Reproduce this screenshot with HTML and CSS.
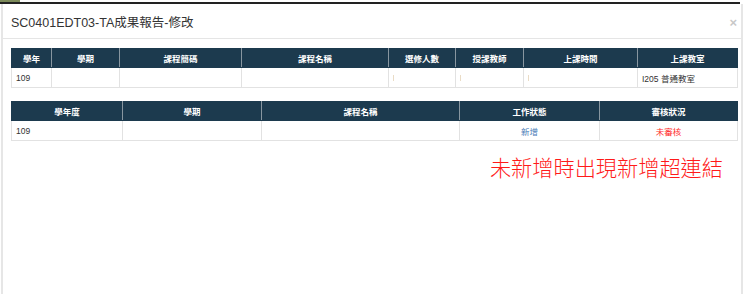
FILE: index.html
```html
<!DOCTYPE html>
<html lang="zh-Hant">
<head>
  <meta charset="UTF-8">
  <title>SC0401EDT03-TA成果報告-修改</title>
  <link rel="stylesheet" href="styles.css">
</head>
<body>
  <div class="topbar"><span class="topbar-green"></span></div>

  <div class="modal">
    <div class="modal-header">
      <h4 class="modal-title">SC0401EDT03-TA成果報告-修改</h4>
      <span class="close">×</span>
    </div>

    <div class="modal-body">
      <table class="grid grid1">
        <colgroup>
          <col class="c40"><col class="c68"><col class="c122"><col class="c147">
          <col class="c67"><col class="c68"><col class="c114"><col>
        </colgroup>
        <thead>
          <tr>
            <th>學年</th>
            <th>學期</th>
            <th>課程簡碼</th>
            <th>課程名稱</th>
            <th>選修人數</th>
            <th>授課教師</th>
            <th>上課時間</th>
            <th>上課教室</th>
          </tr>
        </thead>
        <tbody>
          <tr>
            <td>109</td>
            <td></td>
            <td></td>
            <td></td>
            <td><span class="mark"></span></td>
            <td><span class="mark"></span></td>
            <td><span class="mark"></span></td>
            <td>I205 普通教室</td>
          </tr>
        </tbody>
      </table>

      <table class="grid grid2">
        <colgroup>
          <col class="c111"><col class="c139"><col class="c198"><col class="c140"><col>
        </colgroup>
        <thead>
          <tr>
            <th>學年度</th>
            <th>學期</th>
            <th>課程名稱</th>
            <th>工作狀態</th>
            <th>審核狀況</th>
          </tr>
        </thead>
        <tbody>
          <tr>
            <td>109</td>
            <td></td>
            <td></td>
            <td class="center"><a href="#" class="link">新增</a></td>
            <td class="center red">未審核</td>
          </tr>
        </tbody>
      </table>

      <div class="note">未新增時出現新增超連結</div>
    </div>
  </div>
</body>
</html>
```

FILE: styles.css
```css
html, body {
  height: 100%;
}
body {
  margin: 0;
  background: #fff;
  font-family: "Liberation Sans", Arial, "Noto Sans CJK TC", sans-serif;
  color: #333;
  overflow: hidden;
}
.topbar {
  height: 2px;
  border-bottom: 2px solid #222;
  margin-right: 4px;
  display: flex;
}
.topbar-green {
  width: 20px;
  height: 2px;
  background: #7c8a5a;
}
.modal {
  margin-left: 1px;
  margin-right: 1px;
  height: 290px;
  border-left: 2px solid #e6e6e6;
  border-right: 2px solid #e6e6e6;
  box-sizing: border-box;
}
.modal-header {
  display: flex;
  align-items: center;
  justify-content: space-between;
  height: 34px;
  padding: 0 4px 0 8px;
  border-bottom: 1px solid #e5e5e5;
}
.modal-title {
  margin: 0;
  font-size: 12.5px;
  font-weight: normal;
  color: #333;
  padding-top: 1px;
}
.close {
  font-size: 13px;
  color: #c8c8c8;
  font-weight: bold;
  padding-top: 3px;
}
.modal-body {
  padding: 9px 2px 0 8px;
}
.grid {
  width: 727px;
  border-collapse: collapse;
  table-layout: fixed;
  font-size: 8.5px;
}
.grid th {
  background: #1c3a4e;
  color: #fff;
  font-weight: bold;
  height: 18px;
  padding: 0 4px;
  text-align: center;
  border: 1px solid #8896a0;
  border-top-color: #1c3a4e;
  border-bottom-color: #1c3a4e;
  font-family: "Noto Sans CJK TC", sans-serif;
}
.grid th:first-child { border-left-color: #1c3a4e; }
.grid th:last-child { border-right-color: #1c3a4e; }
.grid td {
  height: 19px;
  padding: 0 4px;
  border: 1px solid #e2e2e2;
  color: #333;
  font-family: "Liberation Sans", Arial, "Noto Sans CJK TC", sans-serif;
}
.grid td.red { color: #ff2a2a; }
.grid1 { margin-bottom: 13px; }
.grid2 { margin-bottom: 14px; }
.c40 { width: 40px; }
.c68 { width: 68px; }
.c122 { width: 122px; }
.c147 { width: 147px; }
.c67 { width: 67px; }
.c114 { width: 114px; }
.c111 { width: 111px; }
.c139 { width: 139px; }
.c198 { width: 198px; }
.c140 { width: 140px; }
.center { text-align: center; }
.link {
  color: #4a7bb7;
  text-decoration: none;
}
.mark {
  display: inline-block;
  width: 1px;
  height: 6px;
  background: #eadcc6;
  vertical-align: middle;
}
.note {
  text-align: right;
  padding-right: 16px;
  color: #ff1a1a;
  font-size: 21.2px;
  font-weight: 300;
  font-family: "Noto Sans CJK TC", sans-serif;
  line-height: 24px;
}
```
